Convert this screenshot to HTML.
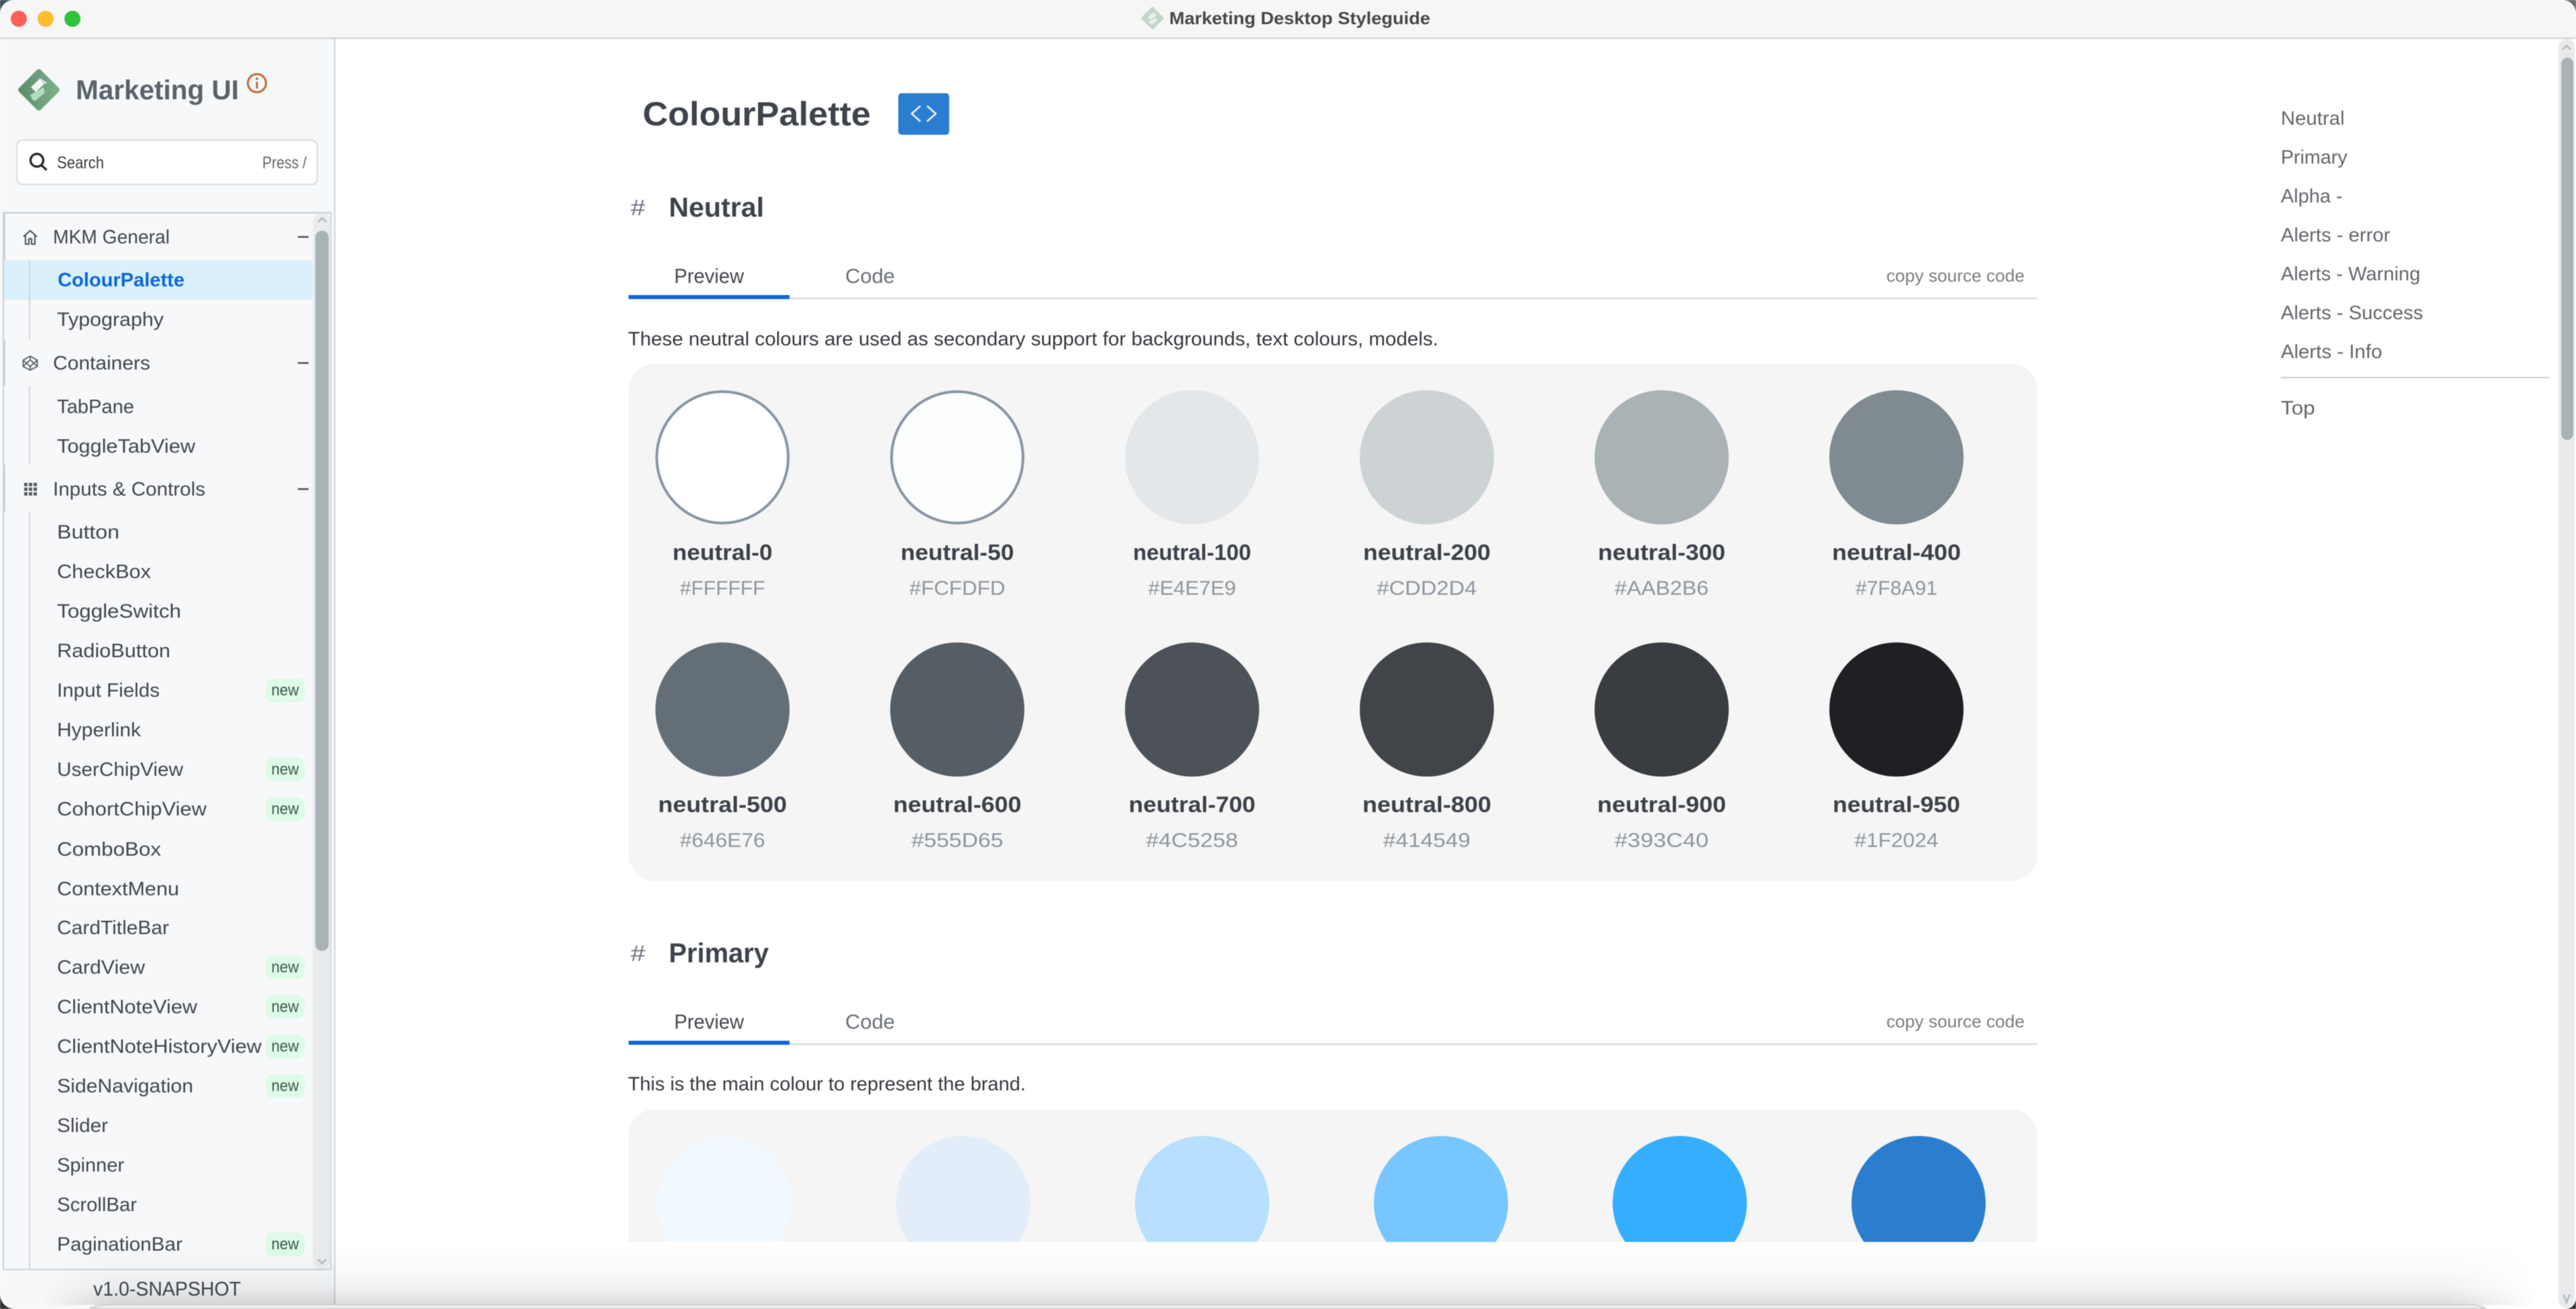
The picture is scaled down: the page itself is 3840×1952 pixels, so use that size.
<!DOCTYPE html>
<html lang="en">
<head>
<meta charset="utf-8">
<title>Marketing Desktop Styleguide</title>
<style>
html,body{margin:0;padding:0;width:3840px;height:1952px;overflow:hidden;background:#fff}
svg{display:block;position:absolute;left:0;top:0;filter:blur(.5px)}
text{font-family:"Liberation Sans",sans-serif;white-space:pre}
.n{font-size:29px;fill:#44474c}
.g{font-size:30px;fill:#44474c}
.b{font-size:24px;fill:#3d5a4c}
.l{font-size:33px;font-weight:700;fill:#3d4149;text-anchor:middle}
.h{font-size:30px;fill:#8f96a0;text-anchor:middle}
.t{font-size:29px;fill:#63676c}
.c{font-size:26px;fill:#7d7d7d}
.hd{font-size:41px;font-weight:700;fill:#3f444c}
.hs{font-size:33px;fill:#6b7280}
.tb{font-size:31px}
.d{font-size:29px;fill:#36393e}
</style>
</head>
<body>
<svg width="3840" height="1952" viewBox="0 0 3840 1952" xmlns="http://www.w3.org/2000/svg">
<defs>
<linearGradient id="lg" x1="0" y1="1" x2="1" y2="0"><stop offset="0" stop-color="#5a8b69"/><stop offset="1" stop-color="#82b390"/></linearGradient>
<linearGradient id="sv" x1="0" y1="0" x2="0" y2="1"><stop offset="0" stop-color="#000" stop-opacity="0"/><stop offset=".45" stop-color="#000" stop-opacity=".02"/><stop offset=".72" stop-color="#000" stop-opacity=".05"/><stop offset="1" stop-color="#000" stop-opacity=".14"/></linearGradient>
<linearGradient id="sh" x1="0" y1="0" x2="1" y2="0"><stop offset="0" stop-color="#fff" stop-opacity="0"/><stop offset=".03" stop-color="#fff"/><stop offset=".965" stop-color="#fff"/><stop offset="1" stop-color="#fff" stop-opacity="0"/></linearGradient>
<mask id="sm" maskUnits="userSpaceOnUse" x="60" y="1852" width="3720" height="100"><rect x="60" y="1852" width="3720" height="100" fill="url(#sh)"/></mask>
</defs>

<!-- window base -->
<rect width="3840" height="1952" fill="#fff"/>

<!-- sidebar -->
<rect x="0" y="57" width="499" height="1895" fill="#f6f8fa"/>
<rect x="498" y="57" width="2" height="1895" fill="#d0d4d8"/>

<!-- logo -->
<rect x="35" y="111" width="46" height="46" rx="4" transform="rotate(45 58 134)" fill="url(#lg)"/>
<path d="M46 130L60 116.7L65 126L53.3 137Z" fill="#f6faf7"/>
<path d="M60 116.7L70.7 123.3L65 126Z" fill="#d7dcd9"/>
<path d="M45 141.7L65 130L66.7 138.3L53.3 150L49.3 150Z" fill="#b5dcc0"/>
<text x="113" y="148" font-size="41" font-weight="700" fill="#5a626a" textLength="243" lengthAdjust="spacingAndGlyphs">Marketing UI</text>
<circle cx="383" cy="124" r="13.5" fill="none" stroke="#c26a2c" stroke-width="3"/>
<rect x="381.5" y="122" width="3" height="10" fill="#c26a2c"/><circle cx="383" cy="117.5" r="1.9" fill="#c26a2c"/>

<!-- search -->
<rect x="25" y="209" width="448" height="66" rx="9" fill="#fff" stroke="#d6dade" stroke-width="2"/>
<circle cx="55" cy="239" r="9.5" fill="none" stroke="#2a2a2a" stroke-width="3.4"/>
<path d="M62 246.5L69.5 253.5" stroke="#2a2a2a" stroke-width="3.4" fill="none"/>
<text x="85" y="251" font-size="25" fill="#3a3a3a" textLength="70" lengthAdjust="spacingAndGlyphs">Search</text>
<text x="391" y="251" font-size="25" fill="#666" textLength="66" lengthAdjust="spacingAndGlyphs">Press /</text>

<!-- tree panel -->
<rect x="4" y="316" width="490" height="2.5" fill="#ccd2d6"/>
<rect x="4" y="316" width="2" height="1578" fill="#ccd2d6"/>
<rect x="4" y="1892" width="490" height="2" fill="#ccd2d6"/>
<rect x="492" y="316" width="2" height="1578" fill="#ccd2d6"/>
<rect x="4" y="318" width="4" height="70" fill="#ccd2d6"/>
<rect x="4" y="507" width="4" height="68" fill="#ccd2d6"/>
<rect x="4" y="693" width="4" height="70" fill="#ccd2d6"/>
<rect x="6" y="388" width="460" height="59" fill="#daf1fd"/>
<rect x="43" y="388" width="2" height="118" fill="#cfd4d8"/>
<rect x="43" y="576" width="2" height="117" fill="#cfd4d8"/>
<rect x="43" y="764" width="2" height="1128" fill="#cfd4d8"/>

<!-- tree scrollbar -->
<rect x="466.5" y="318" width="26" height="1574" rx="13" fill="#e9ebed"/>
<rect x="470" y="344" width="20" height="1074" rx="10" fill="#a9b2b6"/>
<path d="M474 331L480 325L486 331" fill="none" stroke="#b5b9bc" stroke-width="2.5"/>
<path d="M474 1878L480 1884L486 1878" fill="none" stroke="#b5b9bc" stroke-width="2.5"/>

<!-- tree icons -->
<path d="M35 353L45 344L55 353M38 351V364H43V356H47V364H52V351" fill="none" stroke="#555d65" stroke-width="2.2" stroke-linejoin="round"/>
<path d="M45 531L55.5 537V546.5L45 552L34.5 546.5V537ZM34.5 537L45 546.5L55.5 537M34.5 546.5L45 536.5L55.5 546.5M45 531V536.5M45 546.5V552" fill="none" stroke="#555d65" stroke-width="1.8" stroke-linejoin="round"/>
<g fill="#555d65"><rect x="36" y="720" width="5" height="5"/><rect x="43" y="720" width="5" height="5"/><rect x="50" y="720" width="5" height="5"/><rect x="36" y="727" width="5" height="5"/><rect x="43" y="727" width="5" height="5"/><rect x="50" y="727" width="5" height="5"/><rect x="36" y="734" width="5" height="5"/><rect x="43" y="734" width="5" height="5"/><rect x="50" y="734" width="5" height="5"/></g>
<rect x="444" y="352" width="16" height="2.6" fill="#555"/>
<rect x="444" y="540" width="16" height="2.6" fill="#555"/>
<rect x="444" y="728" width="16" height="2.6" fill="#555"/>

<!-- tree text -->
<text class="n" x="79" y="363" textLength="174" lengthAdjust="spacingAndGlyphs">MKM General</text>
<text class="n" x="86" y="427" font-weight="700" style="fill:#0f67d6" textLength="189" lengthAdjust="spacingAndGlyphs">ColourPalette</text>
<text class="n" x="85" y="486" textLength="159" lengthAdjust="spacingAndGlyphs">Typography</text>
<text class="n" x="79" y="551" textLength="145" lengthAdjust="spacingAndGlyphs">Containers</text>
<text class="n" x="85" y="616" textLength="115" lengthAdjust="spacingAndGlyphs">TabPane</text>
<text class="n" x="85" y="675" textLength="206" lengthAdjust="spacingAndGlyphs">ToggleTabView</text>
<text class="n" x="79" y="739" textLength="227" lengthAdjust="spacingAndGlyphs">Inputs &amp; Controls</text>
<text class="n" x="85" y="803" textLength="93" lengthAdjust="spacingAndGlyphs">Button</text>
<text class="n" x="85" y="862" textLength="140" lengthAdjust="spacingAndGlyphs">CheckBox</text>
<text class="n" x="85" y="921" textLength="185" lengthAdjust="spacingAndGlyphs">ToggleSwitch</text>
<text class="n" x="85" y="980" textLength="169" lengthAdjust="spacingAndGlyphs">RadioButton</text>
<text class="n" x="85" y="1039" textLength="153" lengthAdjust="spacingAndGlyphs">Input Fields</text>
<text class="n" x="85" y="1098" textLength="125" lengthAdjust="spacingAndGlyphs">Hyperlink</text>
<text class="n" x="85" y="1157" textLength="188" lengthAdjust="spacingAndGlyphs">UserChipView</text>
<text class="n" x="85" y="1216" textLength="223" lengthAdjust="spacingAndGlyphs">CohortChipView</text>
<text class="n" x="85" y="1276" textLength="155" lengthAdjust="spacingAndGlyphs">ComboBox</text>
<text class="n" x="85" y="1335" textLength="182" lengthAdjust="spacingAndGlyphs">ContextMenu</text>
<text class="n" x="85" y="1393" textLength="167" lengthAdjust="spacingAndGlyphs">CardTitleBar</text>
<text class="n" x="85" y="1452" textLength="131" lengthAdjust="spacingAndGlyphs">CardView</text>
<text class="n" x="85" y="1511" textLength="209" lengthAdjust="spacingAndGlyphs">ClientNoteView</text>
<text class="n" x="85" y="1570" textLength="305" lengthAdjust="spacingAndGlyphs">ClientNoteHistoryView</text>
<text class="n" x="85" y="1629" textLength="203" lengthAdjust="spacingAndGlyphs">SideNavigation</text>
<text class="n" x="85" y="1688" textLength="76" lengthAdjust="spacingAndGlyphs">Slider</text>
<text class="n" x="85" y="1747" textLength="100" lengthAdjust="spacingAndGlyphs">Spinner</text>
<text class="n" x="85" y="1806" textLength="119" lengthAdjust="spacingAndGlyphs">ScrollBar</text>
<text class="n" x="85" y="1865" textLength="187" lengthAdjust="spacingAndGlyphs">PaginationBar</text>

<!-- badges -->
<g fill="#ddfbe6">
<rect x="396" y="1012" width="58" height="35" rx="10"/>
<rect x="396" y="1130" width="58" height="35" rx="10"/>
<rect x="396" y="1189" width="58" height="35" rx="10"/>
<rect x="396" y="1425" width="58" height="35" rx="10"/>
<rect x="396" y="1484" width="58" height="35" rx="10"/>
<rect x="396" y="1543" width="58" height="35" rx="10"/>
<rect x="396" y="1602" width="58" height="35" rx="10"/>
<rect x="396" y="1838" width="58" height="35" rx="10"/>
</g>
<text class="b" x="404.5" y="1037" textLength="41" lengthAdjust="spacingAndGlyphs">new</text>
<text class="b" x="404.5" y="1155" textLength="41" lengthAdjust="spacingAndGlyphs">new</text>
<text class="b" x="404.5" y="1214" textLength="41" lengthAdjust="spacingAndGlyphs">new</text>
<text class="b" x="404.5" y="1450" textLength="41" lengthAdjust="spacingAndGlyphs">new</text>
<text class="b" x="404.5" y="1509" textLength="41" lengthAdjust="spacingAndGlyphs">new</text>
<text class="b" x="404.5" y="1568" textLength="41" lengthAdjust="spacingAndGlyphs">new</text>
<text class="b" x="404.5" y="1627" textLength="41" lengthAdjust="spacingAndGlyphs">new</text>
<text class="b" x="404.5" y="1863" textLength="41" lengthAdjust="spacingAndGlyphs">new</text>

<text class="g" x="139" y="1932" textLength="220" lengthAdjust="spacingAndGlyphs">v1.0-SNAPSHOT</text>

<!-- header -->
<text x="958" y="187" font-size="50" font-weight="700" fill="#3f444c" textLength="340" lengthAdjust="spacingAndGlyphs">ColourPalette</text>
<rect x="1339" y="139" width="76" height="62" rx="5" fill="#2b7ecf"/>
<path d="M1372 158L1359 169.5L1372 181M1382 158L1395 169.5L1382 181" fill="none" stroke="#eaf3fb" stroke-width="2.6" stroke-linejoin="round"/>

<!-- neutral section -->
<text class="hs" x="940" y="321" textLength="22" lengthAdjust="spacingAndGlyphs">#</text>
<text class="hd" x="997" y="323" textLength="142" lengthAdjust="spacingAndGlyphs">Neutral</text>
<text class="tb" x="1005" y="422" fill="#45494f" textLength="104" lengthAdjust="spacingAndGlyphs">Preview</text>
<text class="tb" x="1260" y="422" fill="#6b7078" textLength="74" lengthAdjust="spacingAndGlyphs">Code</text>
<text class="c" x="2812" y="420" textLength="206" lengthAdjust="spacingAndGlyphs">copy source code</text>
<rect x="937" y="444" width="2100" height="2" fill="#d2d5da"/>
<rect x="937" y="440" width="240" height="6" fill="#0f67d6"/>
<text class="d" x="936" y="515" textLength="1208" lengthAdjust="spacingAndGlyphs">These neutral colours are used as secondary support for backgrounds, text colours, models.</text>
<rect x="937" y="542" width="2100" height="772" rx="40" fill="#f4f5f4"/>

<circle cx="1077" cy="682" r="98" fill="#ffffff" stroke="#8a95a3" stroke-width="4"/>
<circle cx="1427" cy="682" r="98" fill="#fcfdfd" stroke="#8a95a3" stroke-width="4"/>
<circle cx="1777" cy="682" r="100" fill="#e4e7e9"/>
<circle cx="2127" cy="682" r="100" fill="#cdd2d4"/>
<circle cx="2477" cy="682" r="100" fill="#aab2b6"/>
<circle cx="2827" cy="682" r="100" fill="#7f8a91"/>
<circle cx="1077" cy="1058" r="100" fill="#646e76"/>
<circle cx="1427" cy="1058" r="100" fill="#555d65"/>
<circle cx="1777" cy="1058" r="100" fill="#4c5258"/>
<circle cx="2127" cy="1058" r="100" fill="#414549"/>
<circle cx="2477" cy="1058" r="100" fill="#393c40"/>
<circle cx="2827" cy="1058" r="100" fill="#1f2024"/>

<text class="l" x="1077" y="835" textLength="149" lengthAdjust="spacingAndGlyphs">neutral-0</text>
<text class="l" x="1427" y="835" textLength="169" lengthAdjust="spacingAndGlyphs">neutral-50</text>
<text class="l" x="1777" y="835" textLength="176" lengthAdjust="spacingAndGlyphs">neutral-100</text>
<text class="l" x="2127" y="835" textLength="190" lengthAdjust="spacingAndGlyphs">neutral-200</text>
<text class="l" x="2477" y="835" textLength="190" lengthAdjust="spacingAndGlyphs">neutral-300</text>
<text class="l" x="2827" y="835" textLength="192" lengthAdjust="spacingAndGlyphs">neutral-400</text>
<text class="l" x="1077" y="1211" textLength="192" lengthAdjust="spacingAndGlyphs">neutral-500</text>
<text class="l" x="1427" y="1211" textLength="191" lengthAdjust="spacingAndGlyphs">neutral-600</text>
<text class="l" x="1777" y="1211" textLength="189" lengthAdjust="spacingAndGlyphs">neutral-700</text>
<text class="l" x="2127" y="1211" textLength="192" lengthAdjust="spacingAndGlyphs">neutral-800</text>
<text class="l" x="2477" y="1211" textLength="192" lengthAdjust="spacingAndGlyphs">neutral-900</text>
<text class="l" x="2827" y="1211" textLength="190" lengthAdjust="spacingAndGlyphs">neutral-950</text>

<text class="h" x="1077" y="887" textLength="127" lengthAdjust="spacingAndGlyphs">#FFFFFF</text>
<text class="h" x="1427" y="887" textLength="143" lengthAdjust="spacingAndGlyphs">#FCFDFD</text>
<text class="h" x="1777" y="887" textLength="131" lengthAdjust="spacingAndGlyphs">#E4E7E9</text>
<text class="h" x="2127" y="887" textLength="149" lengthAdjust="spacingAndGlyphs">#CDD2D4</text>
<text class="h" x="2477" y="887" textLength="140" lengthAdjust="spacingAndGlyphs">#AAB2B6</text>
<text class="h" x="2827" y="887" textLength="122" lengthAdjust="spacingAndGlyphs">#7F8A91</text>
<text class="h" x="1077" y="1263" textLength="127" lengthAdjust="spacingAndGlyphs">#646E76</text>
<text class="h" x="1427" y="1263" textLength="137" lengthAdjust="spacingAndGlyphs">#555D65</text>
<text class="h" x="1777" y="1263" textLength="137" lengthAdjust="spacingAndGlyphs">#4C5258</text>
<text class="h" x="2127" y="1263" textLength="130" lengthAdjust="spacingAndGlyphs">#414549</text>
<text class="h" x="2477" y="1263" textLength="140" lengthAdjust="spacingAndGlyphs">#393C40</text>
<text class="h" x="2827" y="1263" textLength="125" lengthAdjust="spacingAndGlyphs">#1F2024</text>

<!-- primary section -->
<text class="hs" x="940" y="1433" textLength="22" lengthAdjust="spacingAndGlyphs">#</text>
<text class="hd" x="997" y="1435" textLength="149" lengthAdjust="spacingAndGlyphs">Primary</text>
<text class="tb" x="1005" y="1534" fill="#45494f" textLength="104" lengthAdjust="spacingAndGlyphs">Preview</text>
<text class="tb" x="1260" y="1534" fill="#6b7078" textLength="74" lengthAdjust="spacingAndGlyphs">Code</text>
<text class="c" x="2812" y="1532" textLength="206" lengthAdjust="spacingAndGlyphs">copy source code</text>
<rect x="937" y="1556" width="2100" height="2" fill="#d2d5da"/>
<rect x="937" y="1552" width="240" height="6" fill="#0f67d6"/>
<text class="d" x="936" y="1626" textLength="593" lengthAdjust="spacingAndGlyphs">This is the main colour to represent the brand.</text>
<rect x="937" y="1654" width="2100" height="290" rx="40" fill="#f4f5f4"/>
<circle cx="1080" cy="1794" r="100" fill="#f1f8fe"/>
<circle cx="1436" cy="1794" r="100" fill="#e2edf9"/>
<circle cx="1792" cy="1794" r="100" fill="#b6e0fd"/>
<circle cx="2148" cy="1794" r="100" fill="#78c6ff"/>
<circle cx="2504" cy="1794" r="100" fill="#35aeff"/>
<circle cx="2860" cy="1794" r="100" fill="#2b7ecf"/>
<rect x="500" y="1852" width="3314" height="100" fill="#fff"/>

<!-- toc -->
<text class="t" x="3400" y="186" textLength="95" lengthAdjust="spacingAndGlyphs">Neutral</text>
<text class="t" x="3400" y="244" textLength="99" lengthAdjust="spacingAndGlyphs">Primary</text>
<text class="t" x="3400" y="302" textLength="92" lengthAdjust="spacingAndGlyphs">Alpha -</text>
<text class="t" x="3400" y="360" textLength="163" lengthAdjust="spacingAndGlyphs">Alerts - error</text>
<text class="t" x="3400" y="418" textLength="208" lengthAdjust="spacingAndGlyphs">Alerts - Warning</text>
<text class="t" x="3400" y="476" textLength="212" lengthAdjust="spacingAndGlyphs">Alerts - Success</text>
<text class="t" x="3400" y="534" textLength="151" lengthAdjust="spacingAndGlyphs">Alerts - Info</text>
<rect x="3400" y="562" width="400" height="2" fill="#cccccc"/>
<text class="t" x="3400" y="618" textLength="51" lengthAdjust="spacingAndGlyphs">Top</text>

<!-- main scrollbar -->
<rect x="3814" y="58" width="24" height="1892" rx="12" fill="#e8eaec"/>
<rect x="3818" y="86" width="18" height="570" rx="9" fill="#a9b2b6"/>
<path d="M3820 74L3826 68L3832 74" fill="none" stroke="#b5b9bc" stroke-width="2.5"/>
<path d="M3821 1930L3826 1942L3831 1930" fill="none" stroke="#b5b9bc" stroke-width="2.5"/>

<!-- bottom shadow -->
<rect x="60" y="1852" width="3720" height="94" fill="url(#sv)" mask="url(#sm)"/>
<path d="M135 1951Q144 1946 162 1946H3680Q3696 1946 3705 1951Z" fill="#f5f5f5" stroke="#cfcfcf" stroke-width="2"/>

<!-- titlebar -->
<rect x="0" y="0" width="3840" height="57" fill="#f6f6f6"/>
<rect x="0" y="56" width="3840" height="2" fill="#d0d0d0"/>
<circle cx="28" cy="28" r="12" fill="#fe5f57"/>
<circle cx="68" cy="28" r="12" fill="#febc2e"/>
<circle cx="108" cy="28" r="12" fill="#2ec23f"/>
<path d="M1718 11L1734 27L1718 43L1702 27Z" fill="#c3d6c9" stroke="#c3d6c9" stroke-width="2" stroke-linejoin="round"/>
<path d="M1711 25L1720 18L1724 23L1715 30ZM1711 33L1724 26L1725 31L1717 37Z" fill="#e9f1ec"/>
<text x="1743" y="36" font-size="26" font-weight="700" fill="#484848" textLength="389" lengthAdjust="spacingAndGlyphs">Marketing Desktop Styleguide</text>

<!-- window corners -->
<path d="M0 0H20A20 20 0 0 0 0 20Z" fill="#3d4c58"/>
<path d="M3840 0H3820A20 20 0 0 1 3840 20Z" fill="#6a6a6a"/>
<path d="M0 1930A22 22 0 0 0 22 1952H0Z" fill="#333333"/>
<path d="M3840 1936A16 16 0 0 1 3824 1952H3840Z" fill="#333333"/>
</svg>
</body>
</html>
